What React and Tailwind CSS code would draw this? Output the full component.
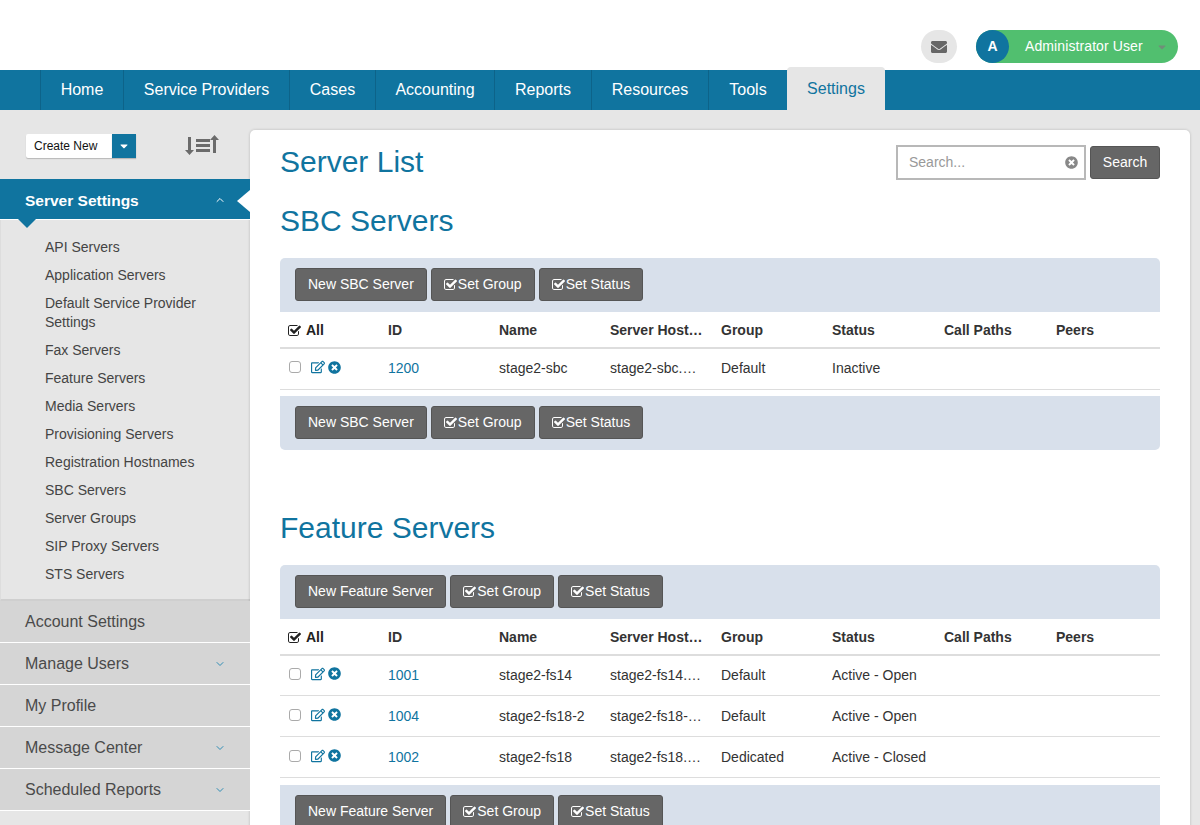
import { ChevronDown, ChevronUp } from 'lucide-react'
import { FaEnvelope, FaRegEdit, FaTimesCircle, FaCaretDown } from 'react-icons/fa'

const navItems = [
  ['Home', 'w-[83px]'],
  ['Service Providers', 'w-[166px]'],
  ['Cases', 'w-[86px]'],
  ['Accounting', 'w-[119px]'],
  ['Reports', 'w-[97px]'],
  ['Resources', 'w-[117px]'],
  ['Tools', 'w-[79px]'],
]

const subItems = [
  'API Servers',
  'Application Servers',
  'Default Service Provider Settings',
  'Fax Servers',
  'Feature Servers',
  'Media Servers',
  'Provisioning Servers',
  'Registration Hostnames',
  'SBC Servers',
  'Server Groups',
  'SIP Proxy Servers',
  'STS Servers',
]

const sideItems = [
  ['Account Settings', false],
  ['Manage Users', true],
  ['My Profile', false],
  ['Message Center', true],
  ['Scheduled Reports', true],
]

const columns = ['ID', 'Name', 'Server Hostname', 'Group', 'Status', 'Call Paths', 'Peers']

function SortIcon() {
  return (
    <svg width="34" height="20" viewBox="0 0 34 20" fill="#6b6b6b">
      <path d="M3 2h3v13h3l-4.500 5L0 15h3z" />
      <path d="M11 4h14v3H11zM11 9h14v3H11zM11 14h14v3H11z" />
      <path d="M28 18h3V5h3L29.500 0 25 5h3z" />
    </svg>
  )
}

// square with a tick that pokes out of the corner
function CheckIcon({ className }) {
  return (
    <svg className={className} viewBox="64 128 1664 1408" fill="currentColor">
      <path d="M1472 930v318q0 119-84.500 203.500t-203.500 84.500h-832q-119 0-203.500-84.500t-84.500-203.500v-832q0-119 84.500-203.500t203.500-84.500h832q63 0 117 25 15 7 18 23 3 17-9 29l-49 49q-14 14-32 8-23-6-45-6h-832q-66 0-113 47t-47 113v832q0 66 47 113t113 47h832q66 0 113-47t47-113v-254q0-13 9-22l64-64q10-10 23-10 6 0 12 3 20 8 20 29zm231-489l-814 814q-24 24-57 24t-57-24l-430-430q-24-24-24-57t24-57l110-110q24-24 57-24t57 24l263 263 647-647q24-24 57-24t57 24l110 110q24 24 24 57t-24 57z" />
    </svg>
  )
}

function Header() {
  return (
    <div className="h-[70px] bg-white flex items-start justify-end pt-[30px] pr-[22px]">
      <div className="w-[36px] h-[33px] rounded-full bg-[#e6e6e6] flex items-center justify-center mr-[19px]">
        <FaEnvelope className="text-[16px] text-[#666]" />
      </div>
      <div className="w-[202px] h-[33px] rounded-full bg-[#51bf6f] flex items-center">
        <div className="w-[33px] h-[33px] rounded-full bg-[#10749f] text-white text-[14px] font-bold flex items-center justify-center">A</div>
        <span className="ml-[16px] text-white text-[14px] tracking-[0.1px]">Administrator User</span>
        <FaCaretDown className="ml-[13px] text-[12px] text-[#6f8f78]" />
      </div>
    </div>
  )
}

function Nav() {
  return (
    <div className="h-[40px] bg-[#10749f] flex pl-[40px]">
      {navItems.map(([label, width]) => (
        <div key={label} className={`${width} h-[40px] border-l border-[#0d6389] text-white text-[16px] flex items-center justify-center`}>
          {label}
        </div>
      ))}
      <div className="relative w-[98px] h-[43px] -mt-[3px] bg-[#e6e6e6] rounded-t-[4px] text-[#10749f] text-[16px] flex items-center justify-center">
        Settings
      </div>
    </div>
  )
}

function Sidebar() {
  return (
    <div className="w-[250px] shrink-0">
      <div className="h-[69px] flex items-start pt-[24px] pl-[26px]">
        <div className="w-[86px] h-[24px] bg-white rounded-l-[2px] text-[12px] text-[#111] flex items-center pl-[8px] shadow-[0_1px_1px_rgba(0,0,0,0.2)]">Create New</div>
        <div className="w-[24px] h-[24px] bg-[#10749f] flex items-center justify-center shadow-[0_1px_1px_rgba(0,0,0,0.2)]">
          <FaCaretDown className="text-[12px] text-white" />
        </div>
        <div className="ml-[49px] mt-[1px]"><SortIcon /></div>
      </div>

      <div className="relative h-[41px] bg-[#10749f] border-b border-white flex items-center pl-[25px] pt-[3px] text-white text-[15.500px] font-bold">
        Server Settings
        <ChevronUp className="absolute left-[214px] top-[15px] w-[12px] h-[12px] text-white" />
        <div className="absolute right-0 top-[11px] w-0 h-0 border-y-[11px] border-y-transparent border-r-[13px] border-r-white" />
        <div className="absolute left-[18px] top-[40px] w-0 h-0 border-x-[9px] border-x-transparent border-t-[9px] border-t-[#10749f]" />
      </div>

      <div className="bg-[#e6e6e6] border-l border-[#ddd] pt-[13px] pb-[11px] pl-[44px] pr-[40px] border-b-2 border-b-[#cfcfcf]">
        {subItems.map((item) => (
          <div key={item} className="text-[14px] leading-[19px] text-[#444] py-[4.500px]">{item}</div>
        ))}
      </div>

      {sideItems.map(([label, hasChevron]) => (
        <div key={label} className="relative h-[42px] bg-[#d5d5d5] border-b border-white flex items-center pl-[25px] text-[16px] text-[#4a4a4a]">
          {label}
          {hasChevron && <ChevronDown className="absolute left-[214px] top-[15px] w-[12px] h-[12px] text-[#2f8db5]" />}
        </div>
      ))}
    </div>
  )
}

function ActionButton({ children, check }) {
  return (
    <button className="h-[33px] px-[12px] bg-[#666] border border-[#555] rounded-[3px] text-white text-[14px] flex items-center whitespace-nowrap">
      {check && <CheckIcon className="w-[13px] h-[11px] mr-[1px]" />}
      {children}
    </button>
  )
}

function Toolbar({ label, position }) {
  return (
    <div className={`h-[54px] bg-[#d8e0eb] flex items-start gap-[4px] pt-[10px] pl-[15px] ${position === 'top' ? 'rounded-t-[5px]' : 'rounded-b-[5px]'}`}>
      <ActionButton>{label}</ActionButton>
      <ActionButton check>Set Group</ActionButton>
      <ActionButton check>Set Status</ActionButton>
    </div>
  )
}

function ServerTable({ rows }) {
  return (
    <table className="w-full table-fixed border-collapse text-[14px] text-[#333]">
      <colgroup>
        <col className="w-[100px]" />
        <col className="w-[111px]" />
        <col className="w-[111px]" />
        <col className="w-[111px]" />
        <col className="w-[111px]" />
        <col className="w-[112px]" />
        <col className="w-[112px]" />
        <col className="w-[112px]" />
      </colgroup>
      <thead>
        <tr className="h-[36px] border-b-2 border-[#ddd] text-left">
          <th className="px-[8px] pt-[2px] font-bold text-[#222]">
            <span className="flex items-center gap-[5px]"><CheckIcon className="w-[13px] h-[11px]" />All</span>
          </th>
          {columns.map((col) => (
            <th key={col} className="px-[8px] pt-[2px] font-bold text-[#333] truncate">{col}</th>
          ))}
        </tr>
      </thead>
      <tbody>
        {rows.map((row) => (
          <tr key={row.id} className="h-[41px] border-b border-[#ddd]">
            <td className="px-[8px]">
              <div className="flex items-center -mt-[3px] pl-[1px]">
                <span className="w-[12px] h-[12px] border border-[#aaa] rounded-[3px] bg-white mr-[10px]" />
                <FaRegEdit className="text-[14px] text-[#10749f] mr-[3px]" />
                <FaTimesCircle className="text-[13px] text-[#10749f]" />
              </div>
            </td>
            <td className="px-[8px] text-[#10749f]">{row.id}</td>
            <td className="px-[8px] truncate">{row.name}</td>
            <td className="px-[8px] truncate">{row.host}</td>
            <td className="px-[8px]">{row.group}</td>
            <td className="px-[8px] whitespace-nowrap">{row.status}</td>
            <td className="px-[8px]"></td>
            <td className="px-[8px]"></td>
          </tr>
        ))}
      </tbody>
    </table>
  )
}

function Section({ title, newLabel, rows, className, gapClass }) {
  return (
    <div className={className}>
      <h2 className="text-[30px] leading-[34px] text-[#10749f]">{title}</h2>
      <div className="mt-[20px]">
        <Toolbar label={newLabel} position="top" />
        <ServerTable rows={rows} />
        <div className={gapClass} />
        <Toolbar label={newLabel} position="bottom" />
      </div>
    </div>
  )
}

export default function App() {
  const sbcRows = [
    { id: 1200, name: 'stage2-sbc', host: 'stage2-sbc.mydomain.net', group: 'Default', status: 'Inactive' },
  ]
  const featureRows = [
    { id: 1001, name: 'stage2-fs14', host: 'stage2-fs14.mydomain.net', group: 'Default', status: 'Active - Open' },
    { id: 1004, name: 'stage2-fs18-2', host: 'stage2-fs18-2.mydomain.net', group: 'Default', status: 'Active - Open' },
    { id: 1002, name: 'stage2-fs18', host: 'stage2-fs18.mydomain.net', group: 'Dedicated', status: 'Active - Closed' },
  ]

  return (
    <div className="h-[825px] overflow-hidden bg-[#e6e6e6] font-['Liberation_Sans',Arial,sans-serif]">
      <Header />
      <Nav />
      <div className="flex">
        <Sidebar />
        <div className="w-[940px] mt-[20px] bg-white rounded-t-[5px] shadow-[0_0_3px_rgba(0,0,0,0.2)] px-[30px]">
          <div className="h-[74px] flex items-start justify-between pt-[15px]">
            <h1 className="text-[30px] leading-[34px] text-[#10749f]">Server List</h1>
            <div className="flex items-center gap-[4px]">
              <div className="relative w-[190px] h-[35px] border-2 border-[#b8b8b8] bg-white flex items-center pl-[11px] text-[14px] text-[#999]">
                Search...
                <FaTimesCircle className="absolute right-[6px] top-[9px] text-[13px] text-[#888]" />
              </div>
              <button className="h-[33px] w-[70px] bg-[#666] border border-[#555] rounded-[3px] text-white text-[14px]">Search</button>
            </div>
          </div>
          <Section title="SBC Servers" newLabel="New SBC Server" rows={sbcRows} gapClass="h-[6px]" />
          <Section className="mt-[61px]" title="Feature Servers" newLabel="New Feature Server" rows={featureRows} gapClass="h-[7px]" />
        </div>
      </div>
    </div>
  )
}
